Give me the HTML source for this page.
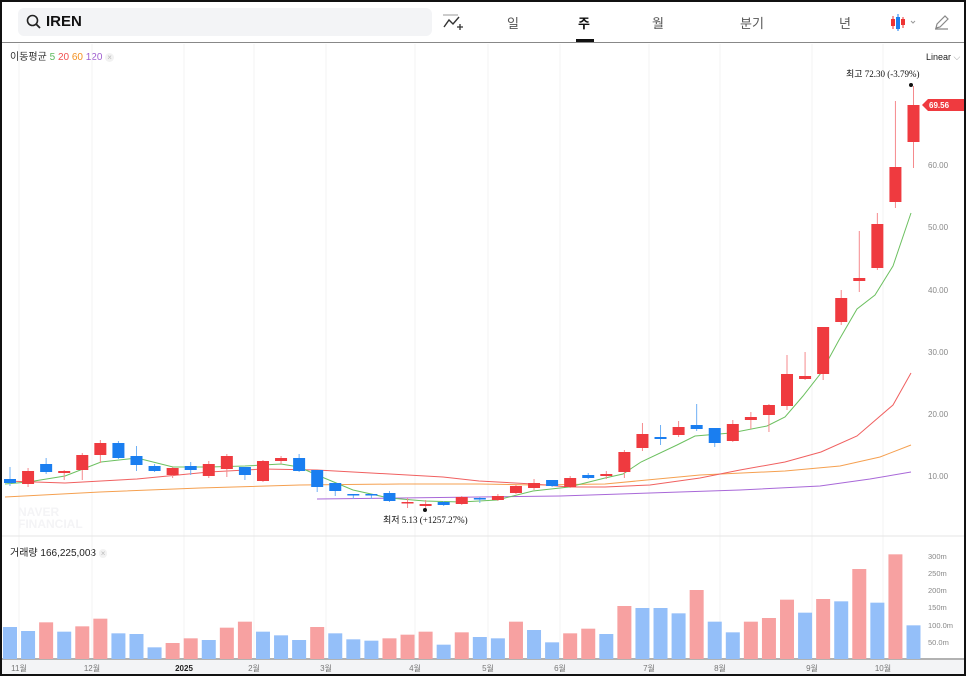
<!DOCTYPE html>
<html><head><meta charset="utf-8"><style>
html,body{margin:0;padding:0;background:#111;}
#f{position:absolute;left:2px;top:2px;width:962px;height:672px;background:#fff;overflow:hidden;font-family:"Liberation Sans","Noto Sans CJK KR",sans-serif;}
.srch{position:absolute;left:16px;top:6px;width:414px;height:28px;background:#f3f4f6;border-radius:6px;}
.srch span{position:absolute;left:28px;top:5px;font-weight:bold;font-size:15px;color:#111;}
.tab{position:absolute;top:11px;font-size:13px;color:#555;}
</style></head><body><div id="f">
<div class="srch"><svg width="16" height="16" style="position:absolute;left:8px;top:6px"><circle cx="6.5" cy="6.5" r="5" fill="none" stroke="#222" stroke-width="1.6"/><line x1="10" y1="10" x2="14" y2="14" stroke="#222" stroke-width="1.8"/></svg><span>IREN</span></div>
<svg width="22" height="20" style="position:absolute;left:440px;top:11px"><line x1="1" y1="2" x2="16" y2="2" stroke="#999"/><polyline points="2,14 7,7 11,11 17,4" fill="none" stroke="#333" stroke-width="1.4"/><path d="M15 14h6M18 11v6" stroke="#333" stroke-width="1.3"/></svg>
<div class="tab" style="left:505px">일</div>
<div class="tab" style="left:576px;color:#111;font-weight:bold">주</div>
<div style="position:absolute;left:574px;top:37px;width:18px;height:3px;background:#111"></div>
<div class="tab" style="left:650px">월</div>
<div class="tab" style="left:738px">분기</div>
<div class="tab" style="left:837px">년</div>
<svg width="30" height="20" style="position:absolute;left:888px;top:11px"><line x1="3" y1="3" x2="3" y2="16" stroke="#e33"/><rect x="1" y="6" width="4" height="7" fill="#e33"/><line x1="8" y1="1" x2="8" y2="18" stroke="#1a7ef0"/><rect x="6" y="4" width="4" height="12" fill="#1a7ef0"/><line x1="13" y1="4" x2="13" y2="15" stroke="#e33"/><rect x="11" y="6" width="4" height="6" fill="#e33"/><path d="M21 8l2 2 2-2" fill="none" stroke="#999"/></svg>
<svg width="16" height="16" style="position:absolute;left:932px;top:12px"><path d="M2 14l1-4 8-8 3 3-8 8z M1 15h13" fill="none" stroke="#888" stroke-width="1.2"/></svg>
<div style="position:absolute;left:0;top:40px;width:962px;height:1px;background:#888"></div>
<div style="position:absolute;left:8px;top:46px;font-size:10px;color:#333">이동평균 <span style="color:#5cb85c">5</span> <span style="color:#f05050">20</span> <span style="color:#f39020">60</span> <span style="color:#a060d0">120</span> <span style="color:#bbb;font-size:8px;background:#f2f2f2;border-radius:6px;padding:0 2px">×</span></div>
<div style="position:absolute;left:924px;top:50px;font-size:9px;color:#222">Linear <span style="color:#999">⌵</span></div>
<div style="position:absolute;left:8px;top:542px;font-size:10px;color:#222">거래량 166,225,003 <span style="color:#bbb;font-size:8px;background:#f2f2f2;border-radius:6px;padding:0 2px">×</span></div>
<svg id="c" width="962" height="672" style="position:absolute;left:0;top:0" font-family="Liberation Sans, sans-serif"></svg>
</div>
<script>
var s='',o=-2;
var months=[[19,'11월'],[92,'12월'],[184,'2025'],[254,'2월'],[326,'3월'],[415,'4월'],[488,'5월'],[560,'6월'],[649,'7월'],[720,'8월'],[812,'9월'],[883,'10월']];
months.forEach(function(m){s+='<line x1="'+(m[0]+o)+'" y1="42" x2="'+(m[0]+o)+'" y2="657" stroke="#f3f3f3"/>';});
s+='<line x1="0" y1="534" x2="962" y2="534" stroke="#e5e5e5"/>';
s+='<line x1="0" y1="657" x2="962" y2="657" stroke="#666"/><rect x="0" y="658" width="962" height="14" fill="#f3f4f6"/>';
months.forEach(function(m){s+='<text x="'+(m[0]+o)+'" y="669" font-size="8" fill="'+(m[1]=='2025'?'#222':'#777')+'" text-anchor="middle" font-family="Liberation Sans, Noto Sans CJK KR, sans-serif"'+(m[1]=='2025'?' font-weight="bold"':'')+'>'+m[1]+'</text>';});
[[476,'10.00'],[414,'20.00'],[352,'30.00'],[290,'40.00'],[227,'50.00'],[165,'60.00']].forEach(function(a){s+='<text x="926" y="'+(a[0]+3+o)+'" font-size="8" fill="#888">'+a[1]+'</text>';});
[[556,'300m'],[573,'250m'],[590,'200m'],[607,'150m'],[625,'100.0m'],[642,'50.0m']].forEach(function(a){s+='<text x="926" y="'+(a[0]+3+o)+'" font-size="7.5" fill="#888">'+a[1]+'</text>';});
var vt=[291,303,277,305,289,266,310,312,352,339,325,330,293,275,305,316,330,291,310,328,332,325,314,305,344,307,321,325,275,300,337,310,296,312,228,234,234,250,180,275,307,275,264,209,248,207,214,117,218,73,286];
var vc='BBRBRRBBBRRBRRBBBRBBBRRRBRBBRBBRRBRBBBRBBRRRBRBRBRB';
for(var i=0;i<51;i++){var x=10+i*18.07+o,t=vt[i]/3+530+o;s+='<rect x="'+(x-7)+'" y="'+t+'" width="14" height="'+(657-t)+'" fill="'+(vc[i]=='R'?'#f7a1a1':'#94bff9')+'"/>';}
function pl(p,c){s+='<polyline fill="none" stroke="'+c+'" stroke-width="1" points="'+p.map(function(q){return (q[0]+o)+','+(q[1]+o)}).join(' ')+'"/>';}
pl([[5,497],[100,492],[200,488],[300,485],[400,484],[479,484],[533,485],[605,484],[700,475],[785,471],[840,466],[880,457],[911,445]],'#f5a050');
pl([[317,499],[400,498],[479,497],[560,496],[650,493],[740,490],[820,486],[870,479],[911,472]],'#a868d8');
pl([[5,481],[65,483],[137,479],[209,472],[263,469],[317,470],[371,473],[443,477],[479,481],[533,484],[569,487],[605,487],[650,485],[700,478],[740,470],[785,462],[821,452],[857,436],[893,405],[911,373]],'#f06060');
var C=[['B',479,483,467,486],['R',471,484,468,487],['B',464,472,458,474],['R',471,473,470,480],['R',455,470,453,480],['R',443,455,440,463],['B',443,458,441,459],['B',456,465,446,471],['B',466,471,464,472],['R',468,475,467,478],['B',466,470,462,475],['R',464,476,461,478],['R',456,469,454,477],['B',467,475,467,480],['R',461,481,460,482],['R',458,461,456,464],['B',458,471,454,472],['B',470,487,470,492],['B',483,491,483,496],['B',494,495,494,499],['B',494,495,494,499],['B',493,501,491,502],['R',502,503,498,508],['R',504,506,500,509],['B',502,505,501,506],['R',497,504,496,505],['B',498,499,497,503],['R',496,500,494,501],['R',486,493,485,494],['R',483,488,479,490],['B',480,486,480,487],['R',478,487,476,488],['B',475,478,473,479],['R',474,476,471,479],['R',452,472,450,478],['R',434,448,423,451],['B',437,439,425,445],['R',427,435,421,437],['B',425,429,404,431],['B',428,443,428,447],['R',424,441,420,442],['R',417,420,412,429],['R',405,415,404,432],['R',374,406,355,410],['R',376,379,352,380],['R',327,374,327,380],['R',298,322,290,325],['R',278,281,231,292],['R',224,268,213,270],['R',167,202,101,208],['R',105,142,86,168]];
pl([[5,484],[28,482],[65,476],[101,462],[137,458],[173,467],[209,467],[245,466],[281,464],[299,467],[317,475],[353,490],[389,498],[425,501],[461,502],[497,500],[533,491],[569,487],[605,478],[623,474],[641,462],[677,445],[695,436],[731,433],[767,426],[785,417],[803,396],[821,373],[839,340],[857,309],[875,295],[893,266],[911,213]],'#6cc060');
C.forEach(function(c,i){var x=10+i*18.07+o,col=c[0]=='R'?'#ef3a3f':'#1a7ef0',wc=c[0]=='R'?'#f58a8d':'#6fb0f5';
s+='<line x1="'+x+'" y1="'+(c[3]+o)+'" x2="'+x+'" y2="'+(c[4]+o)+'" stroke="'+wc+'"/>';
s+='<rect x="'+(x-6)+'" y="'+(c[1]+o)+'" width="12" height="'+Math.max(1.5,c[2]-c[1])+'" fill="'+col+'"/>';});
s+='<circle cx="'+(911+o)+'" cy="'+(85+o)+'" r="2" fill="#111"/><text x="'+(846+o)+'" y="'+(77+o)+'" font-size="9" fill="#111" font-family="Liberation Serif, Noto Sans CJK KR, serif">최고  72.30 (-3.79%)</text>';
s+='<circle cx="'+(425+o)+'" cy="'+(510+o)+'" r="2" fill="#111"/><text x="'+(383+o)+'" y="'+(523+o)+'" font-size="9" fill="#111" font-family="Liberation Serif, Noto Sans CJK KR, serif">최저  5.13 (+1257.27%)</text>';
s+='<path d="M'+(922+o)+' '+(105+o)+'l6 -6h36v12h-36z" fill="#ef3a3f"/><text x="'+(929+o)+'" y="'+(108+o)+'" font-size="8" fill="#fff" font-weight="bold">69.56</text>';
s+='<text x="16" y="514" font-size="12" font-weight="bold" fill="#f4f4f6">NAVER</text><text x="16" y="526" font-size="12" font-weight="bold" fill="#f4f4f6">FINANCIAL</text>';
document.getElementById('c').innerHTML=s;
</script>
</body></html>
